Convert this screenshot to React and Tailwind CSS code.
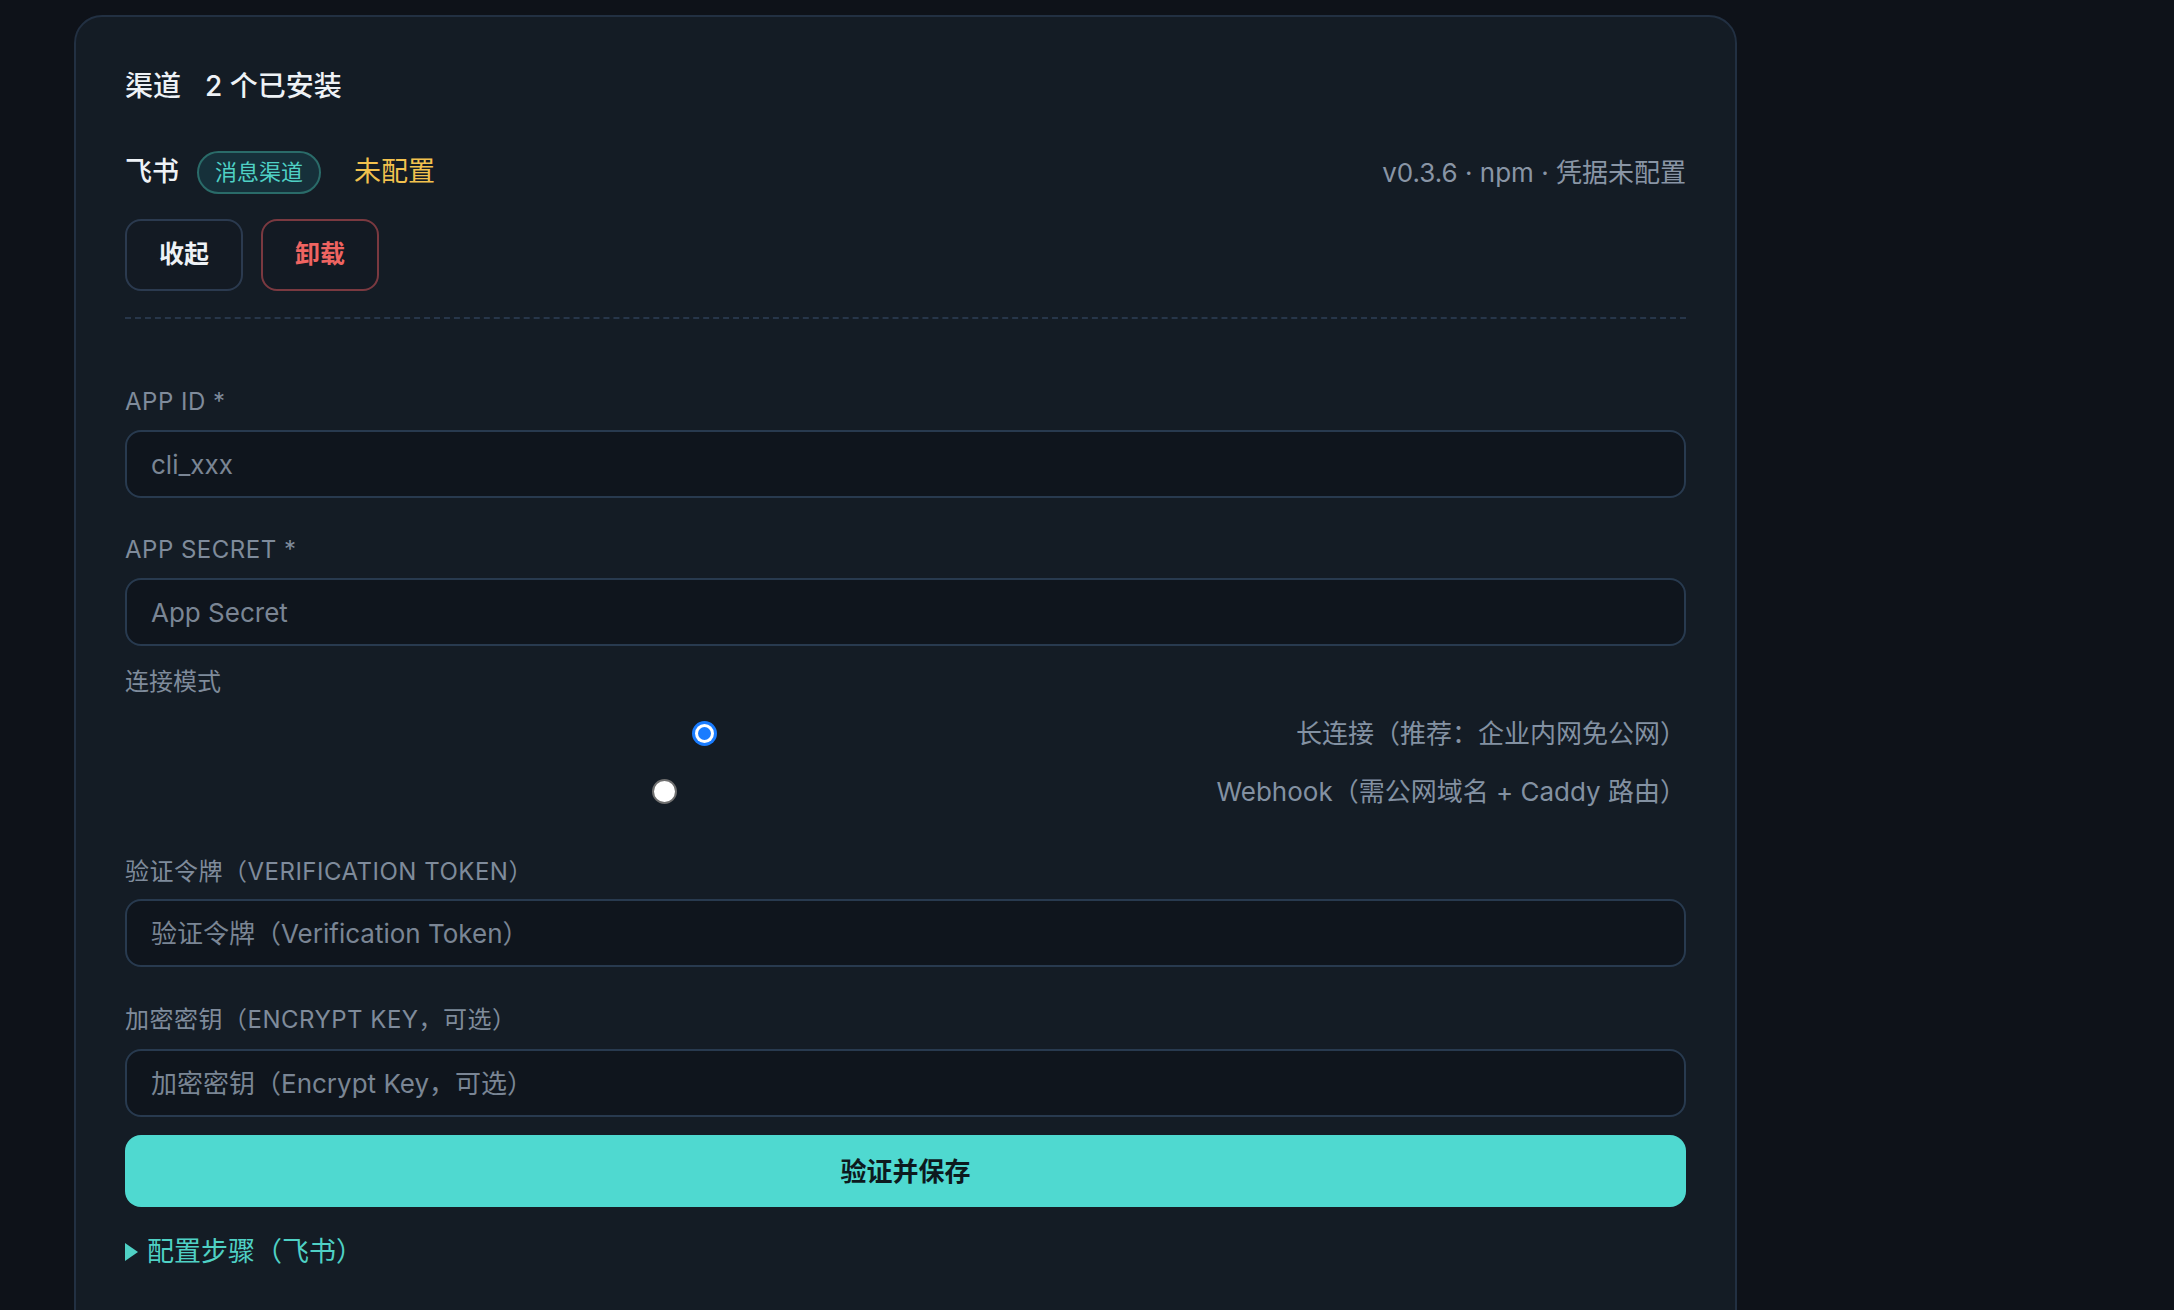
import React from "react";

const FONT = { fontFamily: 'Inter, "Noto Sans CJK SC", "Noto Sans", sans-serif' };

function Field({ label, placeholder, labelClass = "mt-[36px]", inputClass = "mt-[12px]" }) {
  return (
    <>
      <div className={`${labelClass} text-[24px] leading-[32px] tracking-[0.5px] uppercase text-[#7f8b9b]`}>{label}</div>
      <div className={`${inputClass} h-[68px] rounded-[16px] border-2 border-[#283a4f] bg-[#0f151d] flex items-center px-[24px]`}>
        <span className="text-[26px] text-[#7a8594]">{placeholder}</span>
      </div>
    </>
  );
}

function Radio({ checked, label }) {
  return (
    <div className="flex items-center h-[40px] gap-[12px]">
      <div className="flex-1 flex justify-center">
        {checked ? (
          <div className="w-[25px] h-[25px] rounded-full bg-[#1a7cff] flex items-center justify-center">
            <div className="w-[19px] h-[19px] rounded-full bg-white flex items-center justify-center">
              <div className="w-[13px] h-[13px] rounded-full bg-[#1a7cff]" />
            </div>
          </div>
        ) : (
          <div className="w-[25px] h-[25px] rounded-full bg-white border-2 border-[#6f6f6f]" />
        )}
      </div>
      <span className="whitespace-nowrap text-[26px] text-[#8391a2]">{label}</span>
    </div>
  );
}

export default function App() {
  return (
    <div style={FONT} className="min-h-screen w-full bg-[#0e1219] pt-[15px]">
      <div className="ml-[74px] w-[1663px] rounded-[28px] border-2 border-[#223042] bg-[#141c25] px-[49px] pt-[49px] pb-[80px]">
        <div className="flex items-center gap-[24px] text-[28px] leading-[40px] font-medium text-[#eef2f6]">
          <span>渠道</span>
          <span>2 个已安装</span>
        </div>

        <div className="mt-[44px] flex items-center h-[44px]">
          <span className="text-[27px] font-medium text-[#eef2f6]">飞书</span>
          <span className="ml-[18px] h-[43px] px-[16px] flex items-center rounded-full border-2 border-[#2a6b69] bg-[#16303a] text-[22px] text-[#4fd1c5]">消息渠道</span>
          <span className="ml-[33px] text-[27px] text-[#f2c14e]">未配置</span>
          <span className="ml-auto text-[26px] text-[#8995a5]">v0.3.6 · npm · 凭据未配置</span>
        </div>

        <div className="mt-[25px] flex gap-[18px]">
          <button className="w-[118px] h-[72px] rounded-[16px] border-2 border-[#2b3a4f] bg-[#131a23] text-[25px] font-semibold text-[#eef2f6]">收起</button>
          <button className="w-[118px] h-[72px] rounded-[16px] border-2 border-[#7a3940] bg-[#131a23] text-[25px] font-semibold text-[#ef6461]">卸载</button>
        </div>

        <div className="mt-[26px] border-t-2 border-dashed border-[#27364a]" />

        <Field label="APP ID *" placeholder="cli_xxx" labelClass="mt-[67px]" />
        <Field label="APP SECRET *" placeholder="App Secret" />

        <div className="mt-[20px] text-[24px] leading-[32px] text-[#7f8b9b]">连接模式</div>
        <div className="mt-[15px] flex flex-col gap-[18px]">
          <Radio checked label="长连接（推荐：企业内网免公网）" />
          <Radio label="Webhook（需公网域名 + Caddy 路由）" />
        </div>

        <Field label="验证令牌（Verification Token）" placeholder="验证令牌（Verification Token）" labelClass="mt-[45px]" inputClass="mt-[11px]" />
        <Field label="加密密钥（Encrypt Key，可选）" placeholder="加密密钥（Encrypt Key，可选）" labelClass="mt-[37px]" inputClass="mt-[13px]" />

        <button className="mt-[18px] w-full h-[72px] rounded-[16px] bg-[#4fd9d0] text-[26px] font-bold text-[#0d1a1e]">验证并保存</button>

        <div className="mt-[29px] flex items-center gap-[9px] h-[32px]">
          <svg width="13" height="18" viewBox="0 0 13 18"><polygon points="0,0 13,9 0,18" fill="#4fd1c5" /></svg>
          <span className="text-[27px] text-[#4fd1c5]">配置步骤（飞书）</span>
        </div>
      </div>
    </div>
  );
}
